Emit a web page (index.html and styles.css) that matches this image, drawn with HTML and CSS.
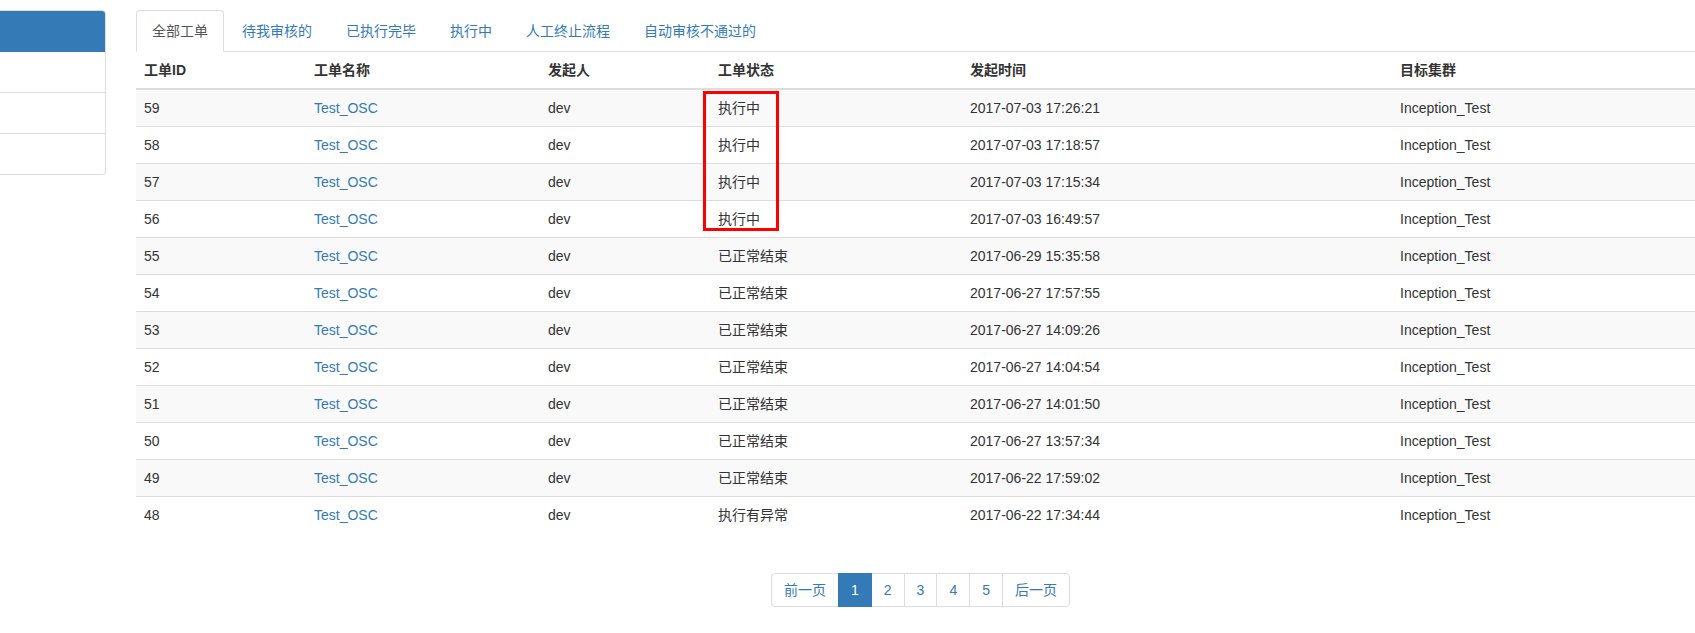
FILE: index.html
```html
<!DOCTYPE html>
<html lang="zh-CN">
<head>
<meta charset="utf-8">
<title>工单列表</title>
<link rel="stylesheet" href="styles.css">
</head>
<body>
<div class="page">
  <aside class="side">
    <div class="side-head"></div>
    <div class="side-item"></div>
    <div class="side-item"></div>
    <div class="side-item"></div>
  </aside>
  <main class="content">
    <ul class="tabs">
      <li class="tab active"><a>全部工单</a></li>
      <li class="tab"><a>待我审核的</a></li>
      <li class="tab"><a>已执行完毕</a></li>
      <li class="tab"><a>执行中</a></li>
      <li class="tab"><a>人工终止流程</a></li>
      <li class="tab"><a>自动审核不通过的</a></li>
    </ul>
    <table class="grid">
      <colgroup>
        <col class="c-id"><col class="c-name"><col class="c-user"><col class="c-state"><col class="c-time"><col>
      </colgroup>
      <thead>
        <tr><th>工单ID</th><th>工单名称</th><th>发起人</th><th>工单状态</th><th>发起时间</th><th>目标集群</th></tr>
      </thead>
      <tbody>
        <tr><td>59</td><td><a>Test_OSC</a></td><td>dev</td><td>执行中</td><td>2017-07-03 17:26:21</td><td>Inception_Test</td></tr>
        <tr><td>58</td><td><a>Test_OSC</a></td><td>dev</td><td>执行中</td><td>2017-07-03 17:18:57</td><td>Inception_Test</td></tr>
        <tr><td>57</td><td><a>Test_OSC</a></td><td>dev</td><td>执行中</td><td>2017-07-03 17:15:34</td><td>Inception_Test</td></tr>
        <tr><td>56</td><td><a>Test_OSC</a></td><td>dev</td><td>执行中</td><td>2017-07-03 16:49:57</td><td>Inception_Test</td></tr>
        <tr><td>55</td><td><a>Test_OSC</a></td><td>dev</td><td>已正常结束</td><td>2017-06-29 15:35:58</td><td>Inception_Test</td></tr>
        <tr><td>54</td><td><a>Test_OSC</a></td><td>dev</td><td>已正常结束</td><td>2017-06-27 17:57:55</td><td>Inception_Test</td></tr>
        <tr><td>53</td><td><a>Test_OSC</a></td><td>dev</td><td>已正常结束</td><td>2017-06-27 14:09:26</td><td>Inception_Test</td></tr>
        <tr><td>52</td><td><a>Test_OSC</a></td><td>dev</td><td>已正常结束</td><td>2017-06-27 14:04:54</td><td>Inception_Test</td></tr>
        <tr><td>51</td><td><a>Test_OSC</a></td><td>dev</td><td>已正常结束</td><td>2017-06-27 14:01:50</td><td>Inception_Test</td></tr>
        <tr><td>50</td><td><a>Test_OSC</a></td><td>dev</td><td>已正常结束</td><td>2017-06-27 13:57:34</td><td>Inception_Test</td></tr>
        <tr><td>49</td><td><a>Test_OSC</a></td><td>dev</td><td>已正常结束</td><td>2017-06-22 17:59:02</td><td>Inception_Test</td></tr>
        <tr><td>48</td><td><a>Test_OSC</a></td><td>dev</td><td>执行有异常</td><td>2017-06-22 17:34:44</td><td>Inception_Test</td></tr>
      </tbody>
    </table>
    <div class="pager-wrap">
      <ul class="pager">
        <li><a>前一页</a></li>
        <li class="on"><a>1</a></li>
        <li><a>2</a></li>
        <li><a>3</a></li>
        <li><a>4</a></li>
        <li><a>5</a></li>
        <li><a>后一页</a></li>
      </ul>
    </div>
    <div class="mark"></div>
  </main>
</div>
</body>
</html>
```

FILE: styles.css
```css
* { box-sizing: border-box; }
html, body { margin: 0; padding: 0; background: #fff; }
body {
  font-family: "Liberation Sans", Arial, "Noto Sans CJK SC", sans-serif;
  font-size: 14px;
  line-height: 20px;
  color: #333;
  overflow: hidden;
}
.page {
  display: flex;
  align-items: flex-start;
  padding-top: 10px;
}
.side {
  width: 106px;
  flex: none;
  border: 1px solid #ddd;
  border-left: 0;
  border-radius: 0 4px 4px 0;
  overflow: hidden;
}
.side-head {
  height: 42px;
  background: #337ab7;
  margin-top: -1px;
}
.side-item {
  height: 41px;
  border-top: 1px solid #ddd;
}
.side-head + .side-item { border-top: 0; height: 40px; }
.content {
  flex: 1;
  margin-left: 30px;
  position: relative;
  min-width: 0;
}
.tabs {
  list-style: none;
  margin: 0;
  padding: 0;
  display: flex;
  border-bottom: 1px solid #ddd;
}
.tab {
  margin-right: 2px;
  margin-bottom: -1px;
}
.tab a {
  display: block;
  padding: 10px 15px;
  border: 1px solid transparent;
  border-radius: 4px 4px 0 0;
  color: #337ab7;
  line-height: 20px;
}
.tab.active a {
  color: #555;
  background: #fff;
  border-color: #ddd #ddd transparent;
}
.grid {
  width: 100%;
  border-collapse: collapse;
  border-spacing: 0;
  margin-bottom: 20px;
}
.c-id { width: 170px; }
.c-name { width: 234px; }
.c-user { width: 170px; }
.c-state { width: 252px; }
.c-time { width: 430px; }
.grid th, .grid td {
  padding: 8px;
  text-align: left;
  vertical-align: top;
  line-height: 20px;
  white-space: nowrap;
}
.grid th {
  font-weight: bold;
  border-bottom: 2px solid #ddd;
}
.grid td { border-top: 1px solid #ddd; }
.grid thead + tbody tr:first-child td { border-top: 0; }
.grid tbody tr:nth-child(odd) { background: #f9f9f9; }
.grid a { color: #337ab7; }
.pager-wrap {
  display: flex;
  justify-content: center;
  padding-left: 10px;
}
.pager {
  list-style: none;
  margin: 20px 0;
  padding: 0;
  display: flex;
}
.pager li a {
  display: block;
  padding: 6px 12px;
  line-height: 20px;
  color: #337ab7;
  background: #fff;
  border: 1px solid #ddd;
  margin-left: -1px;
}
.pager li:first-child a { margin-left: 0; border-radius: 4px 0 0 4px; }
.pager li:last-child a { border-radius: 0 4px 4px 0; }
.pager li.on a {
  color: #fff;
  background: #337ab7;
  border-color: #337ab7;
  position: relative;
}
.mark {
  position: absolute;
  left: 567px;
  top: 81px;
  width: 76px;
  height: 140px;
  border: 3px solid #f00;
}
```
